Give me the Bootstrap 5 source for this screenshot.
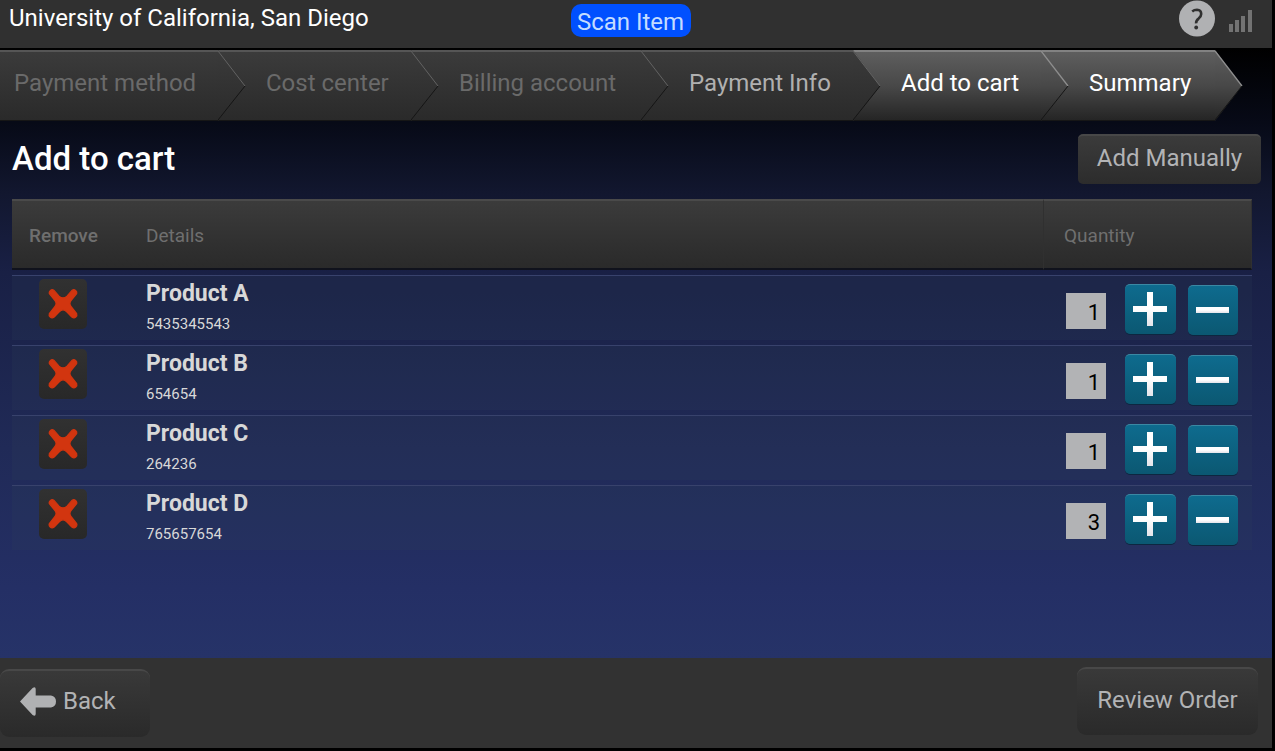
<!DOCTYPE html>
<html lang="en">
<head>
<meta charset="utf-8">
<meta name="viewport" content="width=device-width, initial-scale=1">
<title>Add to cart</title>
<link href="https://cdn.jsdelivr.net/npm/bootstrap@5.3.0/dist/css/bootstrap.min.css" rel="stylesheet">
<style>
  body {
    background: #000;
    color: #fff;
    font-family: Roboto, "Open Sans", sans-serif;
    font-size: 24px;
    line-height: 32px;
    padding: 0 3px 4px 0;
  }
  .top-bar { background: #303030; height: 48px; }
  .top-title { flex: 1 1 0; padding: 2px 0 0 9px; }
  .top-tools { flex: 1 1 0; gap: 14px; padding-right: 20px; }
  .scan-btn {
    background: #0050ff; color: #c4dcff; border: 0; border-radius: 10px; white-space: nowrap;
    font-size: 24px; line-height: 32px; height: 33px; padding: 2px 0 0; margin-top: 4px; width: 120px;
  }
  .page-area {
    background: linear-gradient(#000 0, #070a17 75px, #12172f 145px, #192045 225px, #202a57 400px, #242f65 540px, #263368 100%);
  }
  .steps-bar {
    display: grid; grid-template-columns: 218fr 193fr 230fr 212fr 188fr 174fr;
    padding: 2px 57px 0 0; height: 73px; z-index: 0;
  }
  .step {
    position: relative; height: 71px; min-width: 0; padding-left: 48px; line-height: 62px; white-space: nowrap;
    color: #6a6a6a; text-decoration: none;
    background: linear-gradient(#3b3b3b, #2a2a2a);
    border-top: 2px solid #565656; border-bottom: 1px solid #161616;
  }
  .step svg { position: absolute; left: 100%; top: -2px; width: 28px; height: 71px; }
  .step-lit { background: linear-gradient(#5e5e5e, #484848 50%, #252525); border-top-color: #828282; color: #fff; }
  .step-payment { z-index: 6; padding-left: 14px; }
  .step-center { z-index: 5; }
  .step-billing { z-index: 4; }
  .step-info { z-index: 3; color: #b0b0b0; }
  .step-cart { z-index: 2; }
  .step-summary { z-index: 1; }
  .page-title { font-size: 33px; line-height: 40px; font-weight: 500; }
  .gray-btn {
    color: #b2b3b5; font-size: 24px; line-height: 32px; border: 0; border-top: 2px solid #484848;
    background: linear-gradient(#3b3b3b, #2c2c2c); border-radius: 5px;
  }
  .add-btn { width: 183px; height: 50px; padding: 0 0 4px; }
  .head-row { padding: 13px 11px 0 12px; }
  .cart-area { padding: 10px 20px 0 12px; }
  .cart-table { border-collapse: separate; border-spacing: 0 5px; table-layout: fixed; width: 100%; margin: 0; }
  .cart-table th {
    height: 71px; padding: 2px 0 0; font-size: 19px; font-weight: 400; color: #6f6f6f;
    background: linear-gradient(#3b3b3b, #2a2a2a); border-top: 2px solid #4a4a4a; border-bottom: 2px solid #10121c;
  }
  .cart-table th.remove-head { font-weight: 500; padding-left: 17px; }
  .cart-table th.qty-head { border-left: 1px solid #303030; border-right: 1px solid #303030; padding-left: 20px; }
  .cart-table td { height: 65px; padding: 0; vertical-align: top; border-top: 1px solid #38426c; background: #30485c28; }
  .col-remove { width: 134px; }
  .col-qty { width: 209px; }
  .remove-btn {
    display: block; width: 48px; height: 50px; margin: 3px 0 0 27px; padding: 0; border: 0;
    border-radius: 5px; background: linear-gradient(#313131, #282828);
  }
  .remove-btn svg { display: block; width: 48px; height: 50px; }
  .prod-name { font-size: 23px; line-height: 32px; font-weight: 700; color: #d8d8d8; padding-top: 2px; }
  .prod-code { font-size: 15px; line-height: 28px; color: #d8d8d8; }
  .qty-tools { padding: 8px 14px 0 23px; }
  .qty-input {
    width: 40px; height: 36px; margin-top: 9px; padding: 2px 6px 0 0; text-align: right;
    border: 0; border-radius: 0; background: #b2b3b5; color: #000; font-size: 22px;
  }
  .qty-btn {
    width: 50px; height: 50px; padding: 0; border: 0; border-top: 1px solid #3b88a3; border-radius: 5px;
    background: linear-gradient(#0e6b8e, #0b5872); box-shadow: 0 1px 0 #0d2740;
  }
  .plus-btn { width: 51px; margin: 0 12px 0 auto; }
  .minus-btn { margin-top: 1px; }
  .qty-btn svg { display: block; width: 50px; height: 49px; }
  .blank-area { height: 103px; }
  .bottom-bar { background: #323232; height: 90px; padding: 9px 14px 0 0; }
  .foot-btn { height: 68px; border-radius: 9px; background: linear-gradient(#393939, #2a2a2a); padding: 0 0 4px; }
  .back-btn { width: 150px; margin-top: 2px; padding: 0 0 6px 20px; gap: 6px; }
  .review-btn { width: 181px; }
</style>
</head>
<body>
<svg width="0" height="0" class="position-absolute" aria-hidden="true">
  <defs>
    <linearGradient id="dim" x1="0" y1="0" x2="0" y2="1"><stop offset="0" stop-color="#3b3b3b"/><stop offset="1" stop-color="#2a2a2a"/></linearGradient>
    <linearGradient id="lit" x1="0" y1="0" x2="0" y2="1"><stop offset="0" stop-color="#5e5e5e"/><stop offset=".5" stop-color="#484848"/><stop offset="1" stop-color="#252525"/></linearGradient>
    <linearGradient id="sheen" x1="0" y1="0" x2="0" y2="1"><stop offset=".5" stop-color="#fff"/><stop offset="1" stop-color="#e4e4ea"/></linearGradient>
    <symbol id="tip-dim" viewBox="0 0 28 71"><path d="M0 0L27 36 0 71z" fill="url(#dim)"/><path d="M0 1L27 36" stroke="#636363" fill="none"/><path d="M27 36L0 70" stroke="#151515" fill="none"/></symbol>
    <symbol id="tip-lit" viewBox="0 0 28 71"><path d="M0 0L27 36 0 71z" fill="url(#lit)"/><path d="M0 1L27 36" stroke="#8e8e8e" stroke-width="1.3" fill="none"/><path d="M27 36L0 70" stroke="#151515" fill="none"/></symbol>
    <symbol id="cross" viewBox="0 0 48 50"><path d="M10.3 14.6Q9.8 12.8 11.2 11.6 13 10 14.8 11.2L20 17.2Q24 20.6 28 17.2L33.2 11.2Q35 10 36.8 11.6 38.2 12.8 37.7 14.6L32.4 21.2Q29.4 24.6 32.4 28L37.7 34.6Q38.4 36.6 36.8 38 35 39.6 32.8 38L28 33Q24 28.6 20 33L15.2 38Q13 39.6 11.2 38 9.6 36.6 10.3 34.6L15.6 28Q18.6 24.6 15.6 21.2z" fill="#d2350f" stroke="#d2350f" stroke-width="1.2" stroke-linejoin="round"/></symbol>
    <symbol id="plus" viewBox="0 0 50 49"><path d="M22 7h6v14h14v6H28v14h-6V27H8v-6h14z" fill="url(#sheen)"/></symbol>
    <symbol id="minus" viewBox="0 0 50 49"><path d="M8 21h33v6H8z" fill="url(#sheen)"/></symbol>
  </defs>
</svg>

<header class="top-bar d-flex align-items-start">
  <div class="top-title">University of California, San Diego</div>
  <button type="button" class="scan-btn">Scan Item</button>
  <div class="top-tools d-flex justify-content-end">
    <button type="button" class="btn p-0 border-0" aria-label="Help">
      <svg class="d-block" width="36" height="37" viewBox="0 0 36 37"><circle cx="18" cy="18.5" r="18" fill="#b0b1b3"/><path d="M13.2 11.4Q15.2 9.8 18 9.8 22.2 9.9 22.2 14 22.2 16.4 19.6 18.6 16.9 20.7 17.1 23.4" fill="none" stroke="#303030" stroke-width="2.6"/><circle cx="17.2" cy="27.5" r="1.9" fill="#303030"/></svg>
    </button>
    <svg width="23" height="33" viewBox="0 0 23 33" role="img" aria-label="Signal"><path d="M0 24h4v8H0zM6 20h4v12H6zM12 16h4v16h-4zM19 10h4v22h-4z" fill="#737373"/></svg>
  </div>
</header>

<main class="page-area">
  <nav class="steps-bar position-relative" aria-label="Checkout steps">
    <a href="#" class="step step-payment">Payment method<svg><use href="#tip-dim"/></svg></a>
    <a href="#" class="step step-center">Cost center<svg><use href="#tip-dim"/></svg></a>
    <a href="#" class="step step-billing">Billing account<svg><use href="#tip-dim"/></svg></a>
    <a href="#" class="step step-info">Payment Info<svg><use href="#tip-dim"/></svg></a>
    <a href="#" class="step step-lit step-cart">Add to cart<svg><use href="#tip-lit"/></svg></a>
    <a href="#" class="step step-lit step-summary">Summary<svg><use href="#tip-lit"/></svg></a>
  </nav>

  <div class="head-row d-flex justify-content-between align-items-center">
    <h1 class="page-title m-0">Add to cart</h1>
    <button type="button" class="gray-btn add-btn">Add Manually</button>
  </div>

  <div class="cart-area">
    <table class="cart-table">
      <colgroup><col class="col-remove"><col><col class="col-qty"></colgroup>
      <thead>
        <tr><th class="remove-head">Remove</th><th>Details</th><th class="qty-head">Quantity</th></tr>
      </thead>
      <tbody>
        <tr>
          <td><button type="button" class="remove-btn" aria-label="Remove Product A"><svg><use href="#cross"/></svg></button></td>
          <td><div class="prod-name">Product A</div><div class="prod-code">5435345543</div></td>
          <td><div class="qty-tools d-flex">
            <input class="qty-input" type="text" value="1" aria-label="Quantity of Product A">
            <button type="button" class="qty-btn plus-btn" aria-label="Add one"><svg><use href="#plus"/></svg></button>
            <button type="button" class="qty-btn minus-btn" aria-label="Take one away"><svg><use href="#minus"/></svg></button>
          </div></td>
        </tr>
        <tr>
          <td><button type="button" class="remove-btn" aria-label="Remove Product B"><svg><use href="#cross"/></svg></button></td>
          <td><div class="prod-name">Product B</div><div class="prod-code">654654</div></td>
          <td><div class="qty-tools d-flex">
            <input class="qty-input" type="text" value="1" aria-label="Quantity of Product B">
            <button type="button" class="qty-btn plus-btn" aria-label="Add one"><svg><use href="#plus"/></svg></button>
            <button type="button" class="qty-btn minus-btn" aria-label="Take one away"><svg><use href="#minus"/></svg></button>
          </div></td>
        </tr>
        <tr>
          <td><button type="button" class="remove-btn" aria-label="Remove Product C"><svg><use href="#cross"/></svg></button></td>
          <td><div class="prod-name">Product C</div><div class="prod-code">264236</div></td>
          <td><div class="qty-tools d-flex">
            <input class="qty-input" type="text" value="1" aria-label="Quantity of Product C">
            <button type="button" class="qty-btn plus-btn" aria-label="Add one"><svg><use href="#plus"/></svg></button>
            <button type="button" class="qty-btn minus-btn" aria-label="Take one away"><svg><use href="#minus"/></svg></button>
          </div></td>
        </tr>
        <tr>
          <td><button type="button" class="remove-btn" aria-label="Remove Product D"><svg><use href="#cross"/></svg></button></td>
          <td><div class="prod-name">Product D</div><div class="prod-code">765657654</div></td>
          <td><div class="qty-tools d-flex">
            <input class="qty-input" type="text" value="3" aria-label="Quantity of Product D">
            <button type="button" class="qty-btn plus-btn" aria-label="Add one"><svg><use href="#plus"/></svg></button>
            <button type="button" class="qty-btn minus-btn" aria-label="Take one away"><svg><use href="#minus"/></svg></button>
          </div></td>
        </tr>
      </tbody>
    </table>
  </div>
  <div class="blank-area"></div>
</main>

<footer class="bottom-bar d-flex justify-content-between align-items-start">
  <button type="button" class="gray-btn foot-btn back-btn d-flex align-items-center">
    <svg width="37" height="29" viewBox="0 0 37 29" aria-hidden="true"><path d="M0 14.5L12.6 1Q15.5-1 15.7 2V8.5H31Q36 9.4 36 14.5 36 19.6 31 20.5H15.7V27Q15.5 30 12.6 28z" fill="#b0b1b3"/></svg>
    Back
  </button>
  <button type="button" class="gray-btn foot-btn review-btn">Review Order</button>
</footer>
<script src="https://cdn.jsdelivr.net/npm/bootstrap@5.3.0/dist/js/bootstrap.bundle.min.js"></script>
</body>
</html>
